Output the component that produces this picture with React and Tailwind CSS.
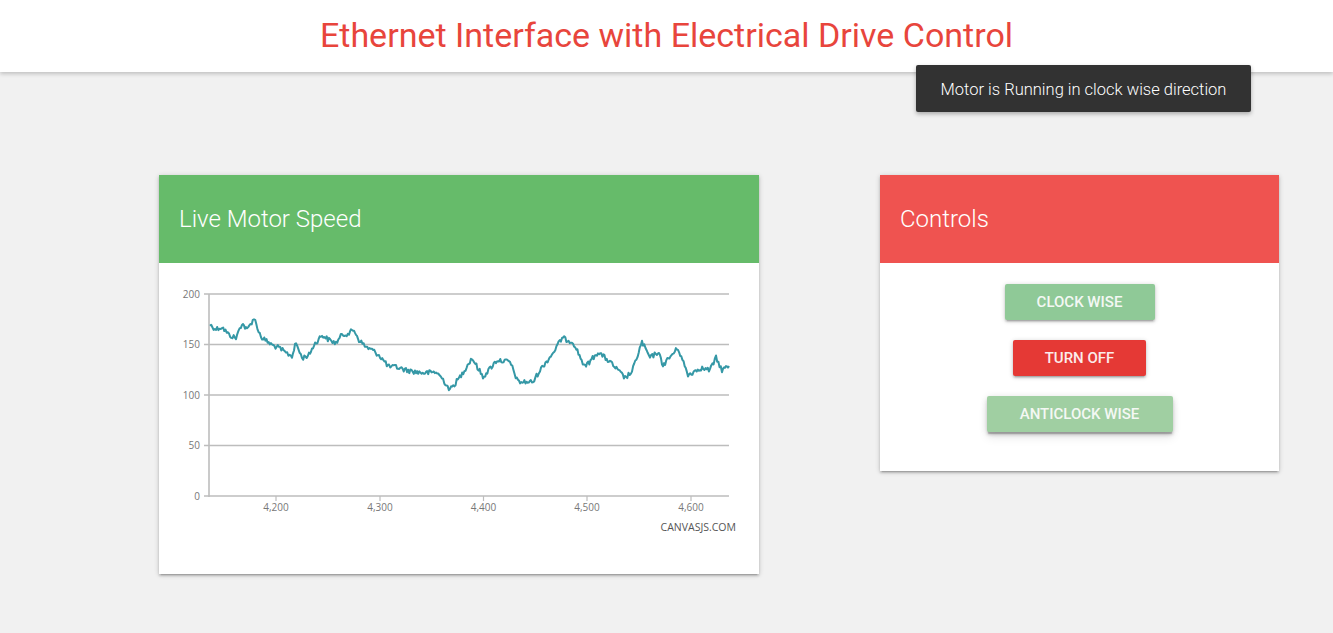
import React from "react";

const KEY = [
  [210, 325], [216, 329], [222, 327], [229, 335], [236, 338], [242, 323], [247, 330], [254, 318],
  [261, 337], [272, 345], [279, 348], [286, 353], [292, 356], [296, 343], [302, 358], [309, 355],
  [314, 345], [322, 335], [329, 340], [336, 343], [342, 335], [349, 333], [354, 330], [359, 340],
  [366, 347], [372, 350], [379, 355], [389, 367], [396, 367], [406, 370], [416, 372], [426, 373],
  [436, 372], [442, 378], [450, 390], [460, 377], [472, 358], [483, 377], [497, 360], [510, 362],
  [518, 382], [533, 382], [540, 370], [553, 353], [562, 338], [573, 342], [585, 367], [598, 352],
  [610, 362], [625, 378], [632, 372], [642, 342], [650, 358], [658, 352], [663, 365], [678, 348],
  [688, 375], [700, 368], [710, 370], [716, 358], [722, 370], [727, 367], [729, 366],
];

function buildPath() {
  let seed = 12345;
  const rnd = () => {
    seed = (seed * 1103515245 + 12345) % 2147483648;
    return seed / 2147483648;
  };
  const pts = [];
  for (let i = 0; i < KEY.length - 1; i++) {
    const [x0, y0] = KEY[i];
    const [x1, y1] = KEY[i + 1];
    const n = Math.max(1, Math.round((x1 - x0) / 1.1));
    for (let k = 0; k < n; k++) {
      const t = k / n;
      const x = x0 + (x1 - x0) * t;
      const y = y0 + (y1 - y0) * t + (rnd() - 0.5) * 5;
      pts.push([x - 159, y - 263]);
    }
  }
  const last = KEY[KEY.length - 1];
  pts.push([last[0] - 159, last[1] - 263]);
  return pts.map((p) => p[0].toFixed(1) + "," + p[1].toFixed(1)).join(" ");
}

const LINE = buildPath();

function Chart() {
  const yv = (v) => 233 - v * 1.01;
  const grid = [0, 50, 100, 150, 200];
  const xt = [
    [117, "4,200"],
    [221, "4,300"],
    [324.5, "4,400"],
    [428, "4,500"],
    [532, "4,600"],
  ];
  return (
    <svg width="600" height="311" className="block">
      {grid.map((g) => (
        <g key={g}>
          <line x1="45" x2="570" y1={yv(g)} y2={yv(g)} stroke="#bdbdbd" strokeWidth="1.6" />
          <text
            x="41"
            y={yv(g) + 3.5}
            textAnchor="end"
            fontSize="10"
            fill="#777"
            fontFamily="'Open Sans', sans-serif"
          >
            {g}
          </text>
        </g>
      ))}
      <line x1="50" x2="50" y1={yv(200)} y2="234" stroke="#bdbdbd" strokeWidth="1.6" />
      {xt.map(([x, l]) => (
        <g key={l}>
          <line x1={x} x2={x} y1="233" y2="238" stroke="#bdbdbd" strokeWidth="1.2" />
          <text
            x={x}
            y="248"
            textAnchor="middle"
            fontSize="10"
            fill="#777"
            fontFamily="'Open Sans', sans-serif"
          >
            {l}
          </text>
        </g>
      ))}
      <polyline points={LINE} fill="none" stroke="#3598a6" strokeWidth="2" strokeLinejoin="round" />
      <text
        x="577"
        y="268"
        textAnchor="end"
        fontSize="10.5"
        fill="#555"
        fontFamily="'Open Sans', sans-serif"
      >
        CANVASJS.COM
      </text>
    </svg>
  );
}

const btnShadow =
  "shadow-[0_2px_2px_0_rgba(0,0,0,0.14),0_3px_1px_-2px_rgba(0,0,0,0.12),0_1px_5px_0_rgba(0,0,0,0.2)]";

export default function App() {
  return (
    <div className="min-h-[633px] bg-[#f1f1f1] relative" style={{ fontFamily: "Roboto, sans-serif" }}>
      <header className="h-[72px] bg-white shadow-[0_2px_4px_0_rgba(0,0,0,0.2)] flex items-center justify-center relative z-10">
        <h1 className="text-[34px] leading-none text-[#e8453c] font-normal pb-[2px]">
          Ethernet Interface with Electrical Drive Control
        </h1>
      </header>

      <div className="absolute left-[916px] top-[65px] z-20 w-[335px] h-[47px] pt-[3px] rounded-[2px] bg-[#323232] text-white text-[16.5px] font-light flex items-center justify-center shadow-[0_2px_4px_rgba(0,0,0,0.3)]">
        Motor is Running in clock wise direction
      </div>

      <main className="flex items-start gap-[121px] pl-[159px] pt-[103px]">
        <section className="w-[600px] bg-white shadow-[0_2px_2px_0_rgba(0,0,0,0.14),0_3px_1px_-2px_rgba(0,0,0,0.12),0_1px_5px_0_rgba(0,0,0,0.2)]">
          <div className="h-[88px] bg-[#66bb6a] flex items-center pl-[20px]">
            <h2 className="text-[24px] font-light text-white">Live Motor Speed</h2>
          </div>
          <Chart />
        </section>

        <section className="w-[399px] bg-white shadow-[0_2px_2px_0_rgba(0,0,0,0.14),0_3px_1px_-2px_rgba(0,0,0,0.12),0_1px_5px_0_rgba(0,0,0,0.2)]">
          <div className="h-[88px] bg-[#ef5350] flex items-center pl-[20px]">
            <h2 className="text-[24px] font-light text-white">Controls</h2>
          </div>
          <div className="flex flex-col items-center gap-[20px] pt-[21px] pb-[39px]">
            <button
              className={`w-[150px] h-[36px] rounded-[2px] bg-[#8fc997] text-[#f4f8f4] text-[15px] font-medium uppercase ${btnShadow}`}
            >
              Clock wise
            </button>
            <button
              className={`w-[133px] h-[36px] rounded-[2px] bg-[#e53935] text-[#fbeceb] text-[15px] font-medium uppercase ${btnShadow}`}
            >
              Turn off
            </button>
            <button
              className="w-[186px] h-[36px] rounded-[2px] bg-[#a0cfa2] text-[#f4f8f4] text-[15px] font-medium uppercase shadow-[0_3px_3px_0_rgba(0,0,0,0.14),0_1px_7px_0_rgba(0,0,0,0.12),0_3px_1px_-1px_rgba(0,0,0,0.2),0_6px_10px_0_rgba(0,0,0,0.08)]"
            >
              Anticlock wise
            </button>
          </div>
        </section>
      </main>
    </div>
  );
}
